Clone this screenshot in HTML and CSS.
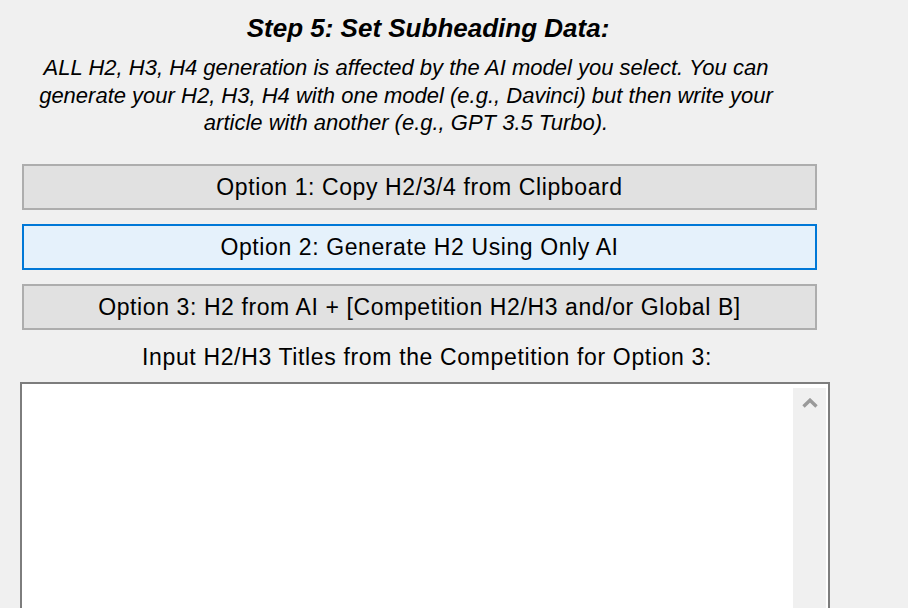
FILE: index.html
```html
<!DOCTYPE html>
<html>
<head>
<meta charset="utf-8">
<link rel="stylesheet" href="styles.css">
</head>
<body>
<div class="panel">
  <h1 class="title">Step 5: Set Subheading Data:</h1>
  <p class="desc">ALL H2, H3, H4 generation is affected by the AI model you select. You can<br>generate your H2, H3, H4 with one model (e.g., Davinci) but then write your<br>article with another (e.g., GPT 3.5 Turbo).</p>
  <div class="options">
    <button class="opt">Option 1: Copy H2/3/4 from Clipboard</button>
    <button class="opt opt-active">Option 2: Generate H2 Using Only AI</button>
    <button class="opt">Option 3: H2 from AI + [Competition H2/H3 and/or Global B]</button>
  </div>
  <div class="label">Input H2/H3 Titles from the Competition for Option 3:</div>
  <div class="textbox">
    <div class="text-area"></div>
    <div class="scrollbar">
      <svg class="chev" width="16" height="10" viewBox="0 0 16 10"><path d="M1.5 8.5 L8 2.2 L14.5 8.5" fill="none" stroke="#9a9a9a" stroke-width="3.4"/></svg>
    </div>
  </div>
</div>
</body>
</html>
```

FILE: styles.css
```css
html, body {
  margin: 0;
  padding: 0;
  background: #f0f0f0;
  height: 100%;
  overflow: hidden;
}
body {
  font-family: "Liberation Sans", Arial, sans-serif;
  color: #000;
}
.panel {
  width: 830px;
  padding-left: 20px;
  box-sizing: border-box;
  display: flex;
  flex-direction: column;
}
.title {
  margin: 13px 0 0 0;
  font-size: 26px;
  font-weight: bold;
  font-style: italic;
  text-align: center;
  line-height: 30px;
  padding-left: 6px;
}
.desc {
  margin: 11px 0 0 0;
  font-size: 22px;
  font-style: italic;
  line-height: 27.5px;
  text-align: center;
  width: 772px;
}
.options {
  display: flex;
  flex-direction: column;
  gap: 14px;
  margin-top: 27px;
  padding-left: 2px;
  width: 795px;
}
.opt {
  height: 46px;
  border: 2px solid #adadad;
  background: #e1e1e1;
  font-family: "Liberation Sans", Arial, sans-serif;
  font-size: 23px;
  letter-spacing: 0.6px;
  color: #000;
  padding: 2px 0 0 0;
  margin: 0;
}
.opt-active {
  border-color: #0078d7;
  background: #e5f1fb;
}
.label {
  margin-top: 14px;
  font-size: 23px;
  letter-spacing: 0.65px;
  line-height: 26px;
  text-align: center;
  padding-left: 4px;
}
.textbox {
  margin-top: 12px;
  height: 300px;
  border: 2px solid #7d7d7d;
  border-bottom: none;
  background: #fff;
  display: flex;
  padding: 4px 2px 0 0;
}
.text-area {
  flex: 1;
}
.scrollbar {
  width: 33px;
  background: #f0f0f0;
  display: flex;
  justify-content: center;
  padding-top: 10px;
  align-items: flex-start;
}
```
